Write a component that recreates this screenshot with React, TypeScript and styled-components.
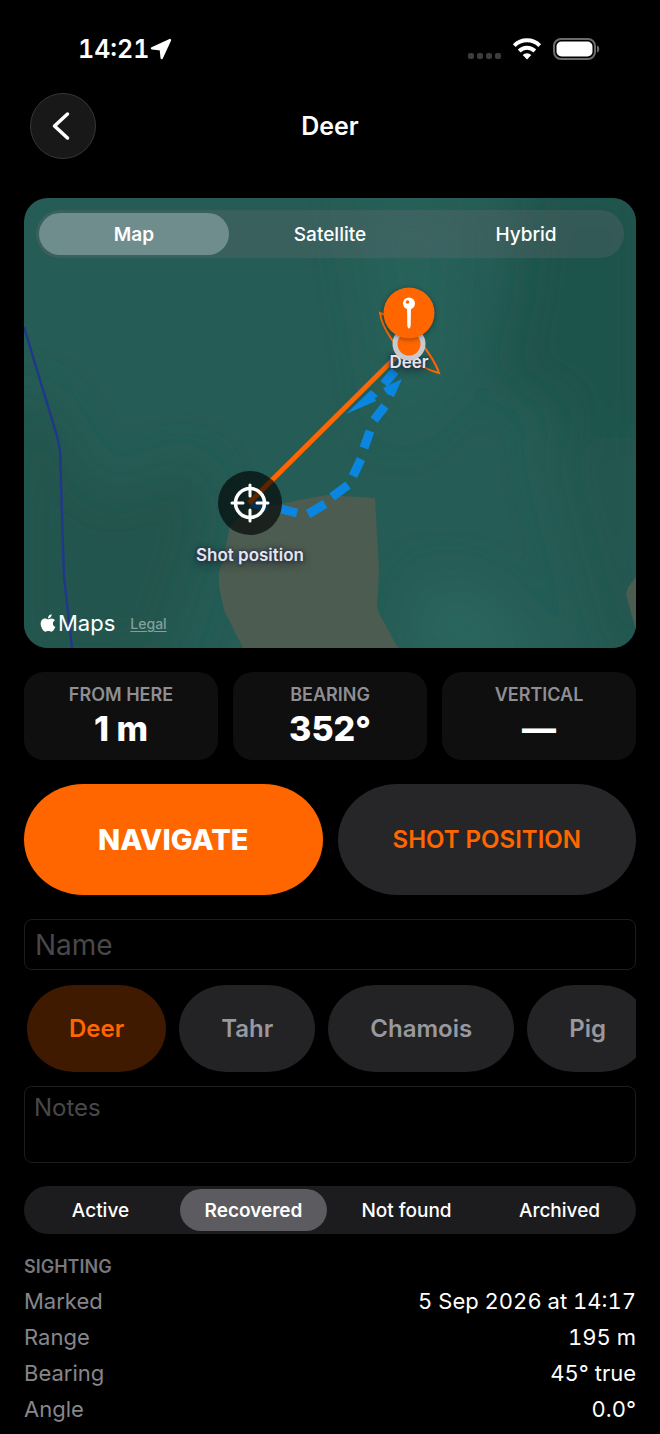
import * as React from 'react'
import styled, { createGlobalStyle } from 'styled-components'
import { FaApple } from 'react-icons/fa'

const { useState } = React

const orange = '#ff6600'

const GlobalStyle = createGlobalStyle`
  * {
    box-sizing: border-box;
  }
  body {
    background: #000;
    color: #fff;
    font-family: Inter, 'Liberation Sans', sans-serif;
    margin: 0;
  }
  button, input, textarea {
    font-family: inherit;
  }
`

const StatusBar = styled.div`
  align-items: center;
  display: flex;
  height: 93px;
  justify-content: space-between;
  padding: 4px 60px 0 78px;
`

const Clock = styled.div`
  align-items: center;
  display: flex;
  font-size: 25px;
  font-variant-numeric: tabular-nums;
  font-weight: 600;
  gap: 1px;
`

const StatusIcons = styled.div`
  align-items: center;
  display: flex;
  gap: 11px;
`

const Header = styled.header`
  align-items: center;
  display: grid;
  grid-template-columns: 66px 1fr 66px;
  padding: 0 30px;
`

const BackButton = styled.button`
  align-items: center;
  background: #181818;
  border: 1px solid #363636;
  border-radius: 50%;
  color: #fff;
  display: flex;
  height: 66px;
  justify-content: center;
  padding: 0 4px 0 0;
`

const Title = styled.h1`
  font-size: 25px;
  font-weight: 600;
  line-height: 32px;
  margin: 0;
  text-align: center;
`

const Main = styled.main`
  padding: 39px 24px 7px;
`

const MapCard = styled.section`
  background: #255c55;
  border-radius: 24px;
  height: 450px;
  overflow: hidden;
  padding: 12px;
  position: relative;
`

const Terrain = styled.svg`
  height: 100%;
  left: 0;
  position: absolute;
  top: 0;
  width: 100%;
`

const Segments = styled.div<{ $glass?: boolean }>`
  background: ${(p) => (p.$glass ? 'rgba(120, 110, 120, 0.26)' : '#1c1c1e')};
  border-radius: 24px;
  display: grid;
  gap: 6px;
  grid-auto-columns: 1fr;
  grid-auto-flow: column;
  height: 48px;
  padding: 3px;
  position: relative;
`

const Segment = styled.button<{ $on: boolean; $glass?: boolean }>`
  background: ${(p) => (!p.$on ? 'none' : p.$glass ? '#6f8d8d' : '#5b5b60')};
  border: 0;
  border-radius: 21px;
  color: #fff;
  font-size: 19px;
  font-weight: ${(p) => (p.$on ? 600 : 500)};
  padding: 0;
`

// マーカーは地図の中心からの距離で置く
const Marker = styled.div<{ $x: number; $y: number }>`
  left: calc(50% + ${(p) => p.$x}px);
  position: absolute;
  top: ${(p) => p.$y}px;
  transform: translate(-50%, -50%);
`

const MarkerLabel = styled(Marker)`
  color: #e2e6f0;
  font-size: 17px;
  font-weight: 600;
  line-height: 20px;
  text-shadow: 0 0 3px #2b3048, 0 0 3px #2b3048, 0 3px 8px rgba(20, 25, 40, 0.8);
  white-space: nowrap;
`

const ShotCircle = styled(Marker)`
  background: rgba(0, 0, 0, 0.64);
  border-radius: 50%;
  height: 64px;
  width: 64px;
`

const DeerDot = styled(Marker)`
  background: ${orange};
  border: 5px solid #c9c9d0;
  border-radius: 50%;
  height: 33px;
  width: 33px;
`

const DeerPin = styled(Marker)`
  background: ${orange};
  border-radius: 50%;
  box-shadow: 0 1px 5px rgba(0, 0, 0, 0.4);
  height: 51px;
  width: 51px;
`

const Attribution = styled.div`
  align-items: center;
  bottom: 10px;
  display: flex;
  font-size: 22px;
  left: 14px;
  line-height: 28px;
  position: absolute;
`

const Legal = styled.a`
  color: #83a09c;
  font-size: 14px;
  font-weight: 500;
  margin-left: 15px;
  padding-top: 3px;
  text-underline-offset: 2px;
`

const Stats = styled.div`
  display: grid;
  gap: 15px;
  grid-template-columns: repeat(3, 1fr);
  margin-top: 24px;
`

const Stat = styled.div`
  align-items: center;
  background: #0f0f0f;
  border-radius: 20px;
  display: flex;
  flex-direction: column;
  height: 88px;
  padding-top: 11px;
`

const StatLabel = styled.div`
  color: #8e8e93;
  font-size: 18px;
  font-weight: 600;
  line-height: 24px;
`

const StatValue = styled.div`
  font-size: 34px;
  font-weight: 800;
  line-height: 44px;
`

const Actions = styled.div`
  display: grid;
  gap: 15px;
  grid-template-columns: 1fr 1fr;
  margin: 24px 0;
`

const ActionButton = styled.button<{ $primary?: boolean }>`
  background: ${(p) => (p.$primary ? orange : '#262628')};
  border: 0;
  border-radius: 60px / 56px;
  color: ${(p) => (p.$primary ? '#fff' : orange)};
  font-size: ${(p) => (p.$primary ? 29 : 24)}px;
  font-weight: ${(p) => (p.$primary ? 800 : 600)};
  height: 111px;
`

const NameInput = styled.input`
  background: #000;
  border: 1px solid #1c1c1e;
  border-radius: 8px;
  color: #fff;
  display: block;
  font-size: 28px;
  height: 51px;
  padding: 0 10px;
  width: 100%;
  &::placeholder {
    color: #48484a;
  }
`

const Chips = styled.div`
  display: flex;
  gap: 13px;
  margin: 15px 0 14px;
  overflow: hidden;
  padding-left: 3px;
`

const Chip = styled.button<{ $on: boolean }>`
  background: ${(p) => (p.$on ? '#401a00' : '#232325')};
  border: 0;
  border-radius: 48px / 44px;
  color: ${(p) => (p.$on ? orange : '#98989f')};
  flex: none;
  font-size: 24px;
  font-weight: 600;
  height: 87px;
  padding: 0 42px;
`

const NotesInput = styled.textarea`
  background: #000;
  border: 1px solid #1c1c1e;
  border-radius: 8px;
  color: #fff;
  display: block;
  font-size: 24px;
  height: 77px;
  line-height: 30px;
  margin-bottom: 23px;
  padding: 6px 9px;
  resize: none;
  width: 100%;
  &::placeholder {
    color: #48484a;
  }
`

const SectionTitle = styled.h2`
  color: #77777c;
  font-size: 18px;
  font-weight: 600;
  line-height: 24px;
  margin: 21px 0 4px;
`

const Details = styled.dl`
  font-size: 22px;
  font-variant-numeric: tabular-nums;
  line-height: 36px;
  margin: 0;
`

const DetailRow = styled.div`
  display: flex;
  justify-content: space-between;
`

const DetailName = styled.dt`
  color: #86868b;
`

const DetailValue = styled.dd`
  margin: 0;
`

const stats = [
  { label: 'FROM HERE', value: '1 m' },
  { label: 'BEARING', value: '352°' },
  { label: 'VERTICAL', value: '—' },
]

const details = [
  { name: 'Marked', value: '5 Sep 2026 at 14:17' },
  { name: 'Range', value: '195 m' },
  { name: 'Bearing', value: '45° true' },
  { name: 'Angle', value: '0.0°' },
]

const StatusRow: React.FC = () => (
  <StatusBar>
    <Clock>
      14:21
      <svg width="22" height="22" viewBox="0 0 22 22">
        <path
          d="M20 2 2 10.300 10.800 11.200 11.700 20z"
          fill="#fff"
          stroke="#fff"
          strokeWidth="2.400"
          strokeLinejoin="round"
        />
      </svg>
    </Clock>
    <StatusIcons>
      <svg width="34" height="22" viewBox="0 0 34 22" fill="#3c3c3e">
        <rect x="1" y="15" width="6" height="6" rx="2" />
        <rect x="10" y="15" width="6" height="6" rx="2" />
        <rect x="19" y="15" width="6" height="6" rx="2" />
        <rect x="28" y="15" width="6" height="6" rx="2" />
      </svg>
      <svg width="30" height="22" viewBox="0 0 30 22" fill="none" stroke="#fff" strokeWidth="4">
        <path d="M2.300 7.600a18 18 0 0 1 25.400 0" />
        <path d="M7.200 13a11 11 0 0 1 15.600 0" />
        <path d="M15 21.500 10.700 17a6.200 6.200 0 0 1 8.600 0z" fill="#fff" stroke="none" />
      </svg>
      <svg width="47" height="22" viewBox="0 0 47 22">
        <rect x="1" y="1" width="41" height="20" rx="7" fill="none" stroke="#6c6c6e" strokeWidth="2" />
        <rect x="3.500" y="3.500" width="36" height="15" rx="5" fill="#fff" />
        <path d="M44 7.500c3 .800 3 6.200 0 7z" fill="#6c6c6e" />
      </svg>
    </StatusIcons>
  </StatusBar>
)

const MapDrawing: React.FC = () => (
  <Terrain viewBox="0 0 612 450" preserveAspectRatio="xMidYMid slice">
    <defs>
      <filter id="soft" x="-50%" y="-50%" width="200%" height="200%">
        <feGaussianBlur stdDeviation="24" />
      </filter>
    </defs>
    <g filter="url(#soft)">
      <path d="M500-20h140v250l-60 60-50-80-60-30 20-80z" fill="#1f524b" />
      <path d="M520 240h120v230h-60z" fill="#225750" />
      <path d="M-20 200h40l60 100 90-40 20 60-50 150H-20z" fill="#21554e" />
      <path d="M400 380l60 10 70 80H380z" fill="#29655d" />
      <path d="M330 0h110l-10 180-60 60z" fill="#28625a" />
    </g>
    {/* 裸地 */}
    <path
      d="M223 312 256 306 291 299 303 297 351 300 355 374 353 409 356 417 374 450H219L200 412 195 389V375L201 352 206 329z"
      fill="#4d5c50"
    />
    <path d="M612 379 604 389 602 397 612 432z" fill="#4d5c50" />
    {/* 川 */}
    <path d="M0 129 33 238 36 252 39 349 40 379 48 450" fill="none" stroke="#21378a" strokeWidth="2.400" />
    <path
      d="M356 115C358 131 374 152 385 160 396 168 407 173 415 175 411 163 404 153 392 139 382 129 366 118 356 115z"
      fill="none"
      stroke={orange}
      strokeWidth="2"
    />
    {/* 歩いた軌跡 */}
    <g stroke="#0b86e0" strokeWidth="9">
      <path d="M227 305 244 309M257 311 273 315M284 316 301 306M308 299 324 287M329 278 337 261M340 250 346 233M350 222 361 208" />
      <path d="M360 186 371 173" />
    </g>
    <path d="M378 181 370 199 363 196 359 190z" fill="#0b86e0" />
    <path d="M322 216 347 192 354 198 351 200 352 203z" fill="#0b86e0" />
    <path d="M225 305 385 146" stroke={orange} strokeWidth="5" />
  </Terrain>
)

type SegmentedProps = {
  options: string[]
  initial: string
  label: string
  glass?: boolean
}

const Segmented: React.FC<SegmentedProps> = ({ options, initial, label, glass }) => {
  const [current, setCurrent] = useState(initial)

  return (
    <Segments $glass={glass} role="group" aria-label={label}>
      {options.map((option) => (
        <Segment
          key={option}
          type="button"
          $glass={glass}
          $on={option === current}
          aria-pressed={option === current}
          onClick={() => setCurrent(option)}
        >
          {option}
        </Segment>
      ))}
    </Segments>
  )
}

const App: React.FC = () => {
  const [species, setSpecies] = useState('Deer')
  const [name, setName] = useState('')
  const [notes, setNotes] = useState('')

  return (
    <>
      <GlobalStyle />
      <StatusRow />
      <Header>
        <BackButton type="button" aria-label="Back">
          <svg width="18" height="30" viewBox="0 0 18 30" fill="none" stroke="#fff" strokeWidth="3.500">
            <path d="M15.500 3 2.500 15l13 12" strokeLinecap="round" strokeLinejoin="round" />
          </svg>
        </BackButton>
        <Title>Deer</Title>
      </Header>
      <Main>
        <MapCard>
          <MapDrawing />
          <Segmented glass label="Map type" options={['Map', 'Satellite', 'Hybrid']} initial="Map" />
          <ShotCircle $x={-80} $y={305}>
            <svg width="64" height="64" viewBox="0 0 64 64" fill="none" stroke="#fff" strokeWidth="3">
              <circle cx="32" cy="32" r="14.500" strokeWidth="3.500" />
              <path d="M32 14v11M32 39v11M14 32h11M39 32h11" strokeLinecap="round" />
            </svg>
          </ShotCircle>
          <MarkerLabel $x={-80} $y={357}>Shot position</MarkerLabel>
          <MarkerLabel $x={79} $y={164}>Deer</MarkerLabel>
          <DeerDot $x={79} $y={146} />
          <DeerPin $x={79} $y={115}>
            <svg width="51" height="51" viewBox="0 0 51 51" fill="#fff">
              <path d="M23.500 19h4l-.3 18.500c-.1 4.500-3.300 4.500-3.400 0z" />
              <circle cx="25.500" cy="16" r="6" />
              <circle cx="24" cy="14.500" r="1.800" fill={orange} />
            </svg>
          </DeerPin>
          <Attribution>
            <FaApple size={20} />
            Maps
            <Legal href="#legal">Legal</Legal>
          </Attribution>
        </MapCard>
        <Stats>
          {stats.map((stat) => (
            <Stat key={stat.label}>
              <StatLabel>{stat.label}</StatLabel>
              <StatValue>{stat.value}</StatValue>
            </Stat>
          ))}
        </Stats>
        <Actions>
          <ActionButton type="button" $primary>NAVIGATE</ActionButton>
          <ActionButton type="button">SHOT POSITION</ActionButton>
        </Actions>
        <NameInput
          aria-label="Name"
          placeholder="Name"
          value={name}
          onChange={(event) => setName(event.target.value)}
        />
        <Chips>
          {['Deer', 'Tahr', 'Chamois', 'Pig'].map((animal) => (
            <Chip
              key={animal}
              type="button"
              $on={animal === species}
              onClick={() => setSpecies(animal)}
            >
              {animal}
            </Chip>
          ))}
        </Chips>
        <NotesInput
          aria-label="Notes"
          placeholder="Notes"
          value={notes}
          onChange={(event) => setNotes(event.target.value)}
        />
        <Segmented
          label="Status"
          options={['Active', 'Recovered', 'Not found', 'Archived']}
          initial="Recovered"
        />
        <SectionTitle>SIGHTING</SectionTitle>
        <Details>
          {details.map((row) => (
            <DetailRow key={row.name}>
              <DetailName>{row.name}</DetailName>
              <DetailValue>{row.value}</DetailValue>
            </DetailRow>
          ))}
        </Details>
      </Main>
    </>
  )
}

export default App
